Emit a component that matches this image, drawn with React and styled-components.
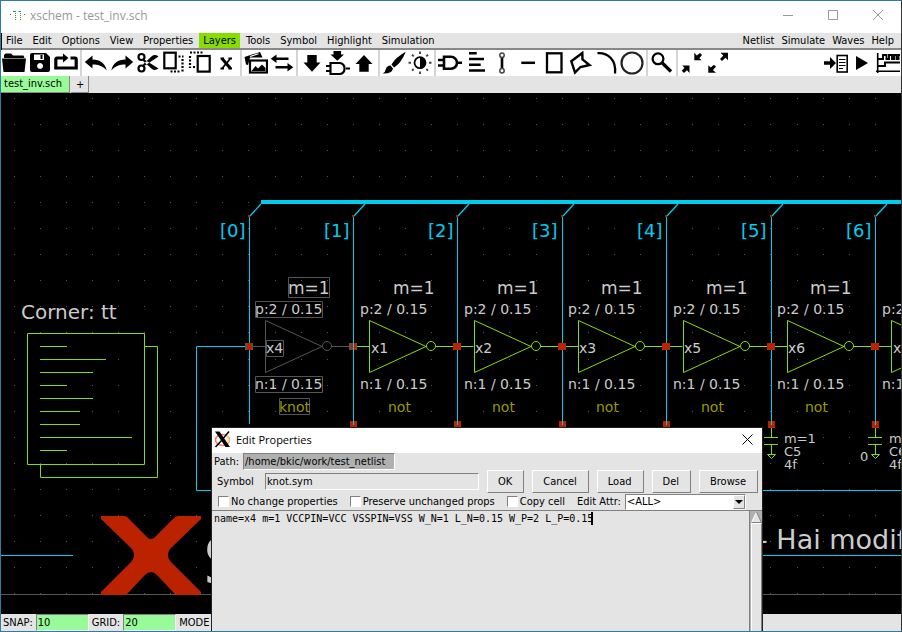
import React from "react";
import styled, { createGlobalStyle, css } from "styled-components";

const face = "#e4e4e4";
const cyan = "#00ccee";
const green = "#88dd00";
const red = "#bb2200";
const dim = "#555555";
const ink = "#cccccc";
const paleGreen = "#98fb98";

const GlobalStyle = createGlobalStyle`
  * { box-sizing: border-box; }
  html, body, #root { margin: 0; height: 100%; }
  body { overflow: hidden; background: #000; }
  body, button, input, select { font: 11px/13px "DejaVu Sans Condensed", "DejaVu Sans", sans-serif; color: #000; }
`;

const Window = styled.div`
  position: relative;
  display: flex;
  flex-direction: column;
  height: 100vh;
  overflow: hidden;
  border: 1px solid #2a7da8;
  border-right-color: #333;
`;

const TitleBar = styled.header`
  display: flex;
  align-items: center;
  flex: none;
  height: ${(p) => (p.$dialog ? "25px" : "32px")};
  padding: ${(p) => (p.$dialog ? "0 9px 2px 2px" : "0 17px 3px 8px")};
  gap: 5px;
  background: #fff;
  color: ${(p) => (p.$dialog ? "#000" : "#999")};
`;

const Title = styled.h1`
  flex: 1;
  margin: 0;
  font: 12px/16px "Open Sans", sans-serif;
  font-size: ${(p) => (p.$small ? "11px" : "12px")};
`;

const WindowButtons = styled.div`
  display: flex;
  gap: 34px;
`;

const GlyphButton = styled.button`
  display: flex;
  padding: 0;
  border: 0;
  background: none;
`;

const MenuBar = styled.nav`
  display: flex;
  flex: none;
  height: 17px;
  margin-left: 1px;
  padding-right: 3px;
  gap: 2px;
  background: ${face};
  border-bottom: 2px solid #888;
`;

const MenuItem = styled.button`
  height: 15px;
  padding: 0 4px;
  border: 0;
  background: ${(p) => (p.$active ? green : "transparent")};
`;

const Grow = styled.div`
  flex: 1;
`;

const RightMenus = styled.div`
  display: flex;
  ${MenuItem} { padding-left: 3px; }
`;

const ToolBar = styled.div`
  display: flex;
  flex: none;
  height: 26px;
  background: #fff;
`;

const ToolButton = styled.button`
  flex: none;
  width: 26px;
  height: 26px;
  padding: 1px;
  border: 0;
  background: none;
  svg { display: block; }
`;

const Separator = styled.div`
  flex: none;
  width: 2px;
  margin: 0 1px;
  background: #d4d4d4;
`;

const TabRow = styled.div`
  display: flex;
  flex: none;
  height: 17px;
  gap: 1px;
  background: ${face};
`;

const Tab = styled.button`
  height: 17px;
  padding: ${(p) => (p.$active ? "0 7px 2px 3px" : "0 4px 0 5px")};
  border: solid;
  border-width: 0 1px 1px 0;
  border-color: #888;
  background: ${(p) => (p.$active ? paleGreen : face)};
`;

const Canvas = styled.main`
  flex: 1;
  min-height: 0;
  background: #000;
  overflow: hidden;
  svg { display: block; font-family: "DejaVu Sans", sans-serif; }
`;

const StatusBar = styled.footer`
  display: flex;
  align-items: center;
  flex: none;
  height: 17px;
  gap: 3px;
  padding-left: 2px;
  background: ${face};
`;

const sunken = css`
  border: 1px solid;
  border-color: #808080 #fff #fff #808080;
  border-radius: 0;
  outline: 0;
`;

const StatusInput = styled.input`
  ${sunken}
  width: 53px;
  height: 17px;
  padding: 0 1px;
  background: ${paleGreen};
`;

const Dialog = styled.section`
  position: absolute;
  left: 210px;
  top: 426px;
  bottom: -2px;
  width: 552px;
  display: flex;
  flex-direction: column;
  background: ${face};
  border: 1px solid #222;
`;

const PathRow = styled.div`
  display: flex;
  align-items: center;
  flex: none;
  height: 17px;
  padding-left: 2px;
  gap: 4px;
`;

const SymbolRow = styled.div`
  display: flex;
  align-items: center;
  flex: none;
  height: 23px;
  padding: 0 4px 0 5px;
  gap: 8px;
`;

const CheckRow = styled.div`
  display: flex;
  align-items: center;
  flex: none;
  height: 17px;
  padding: 0 16px 0 6px;
  gap: 12px;
`;

const PathInput = styled.input`
  ${sunken}
  width: 152px;
  height: 17px;
  padding: 0 1px;
  background: #b0b0b0;
`;

const SymbolInput = styled.input`
  ${sunken}
  flex: 1;
  min-width: 0;
  height: 17px;
  margin-left: 3px;
  padding: 0 1px;
  background: ${face};
`;

const PushButton = styled.button`
  height: 23px;
  padding: 0 11px 0 10px;
  border: 1px solid;
  border-color: #fff #808080 #808080 #fff;
  background: ${face};
`;

const CheckLabel = styled.label`
  display: flex;
  align-items: center;
  gap: 2px;
  white-space: nowrap;
`;

const CheckBox = styled.input`
  ${sunken}
  appearance: none;
  width: 11px;
  height: 11px;
  margin: 0;
  background: #fff;
`;

const AttrLabel = styled.label`
  white-space: nowrap;
`;

const SelectBox = styled.div`
  ${sunken}
  display: grid;
  flex: 1;
  height: 16px;
  margin-left: -8px;
  background: #fff;
  > * { grid-area: 1 / 1; }
`;

const Select = styled.select`
  appearance: none;
  border: 0;
  padding: 0 1px;
  background: transparent;
  outline: 0;
`;

const SelectArrow = styled.span`
  display: flex;
  align-items: center;
  justify-content: center;
  justify-self: end;
  width: 12px;
  height: 14px;
  pointer-events: none;
  background: ${face};
  border: 1px solid;
  border-color: #fff #808080 #808080 #fff;
`;

const Editor = styled.div`
  position: relative;
  display: flex;
  flex: 1;
  min-height: 0;
  border-top: 1px solid #808080;
  font: 10px/13px "DejaVu Sans Mono", monospace;
`;

const TextArea = styled.textarea`
  flex: 1;
  padding: 1px 2px;
  border: 0;
  outline: 0;
  resize: none;
  overflow: hidden;
  background: ${face};
  color: #000;
  font: inherit;
`;

const Caret = styled.span`
  position: absolute;
  top: 1px;
  left: 63ch;
  width: 2px;
  height: 13px;
  background: #000;
`;

const ScrollBar = styled.div`
  display: flex;
  flex-direction: column;
  width: 13px;
  border-left: 1px solid #808080;
  padding-left: 1px;
  background: #b0b0b0;
`;

const ScrollThumb = styled.div`
  flex: 1;
  background: ${face};
  border: 1px solid #fff;
  border-right-color: #808080;
`;

/* ---------- toolbar icons, 24 x 24 ---------- */

const line = { fill: "none", stroke: "#000", strokeWidth: 2.2 };

const icons = {
  open: (
    <>
      <path d="M2 7V4L3.500 2.500H9L11 4.500H21.500L22.500 7Z" />
      <path d="M0 7.500H24L22.500 21H1.500Z" />
    </>
  ),
  save: (
    <path fillRule="evenodd" d="M4 2H18L22 6V19Q22 21 20 21H4Q2 21 2 19V4Q2 2 4 2ZM6 3.500V9H16V3.500ZM12.500 4H14.500V8H12.500ZM12 12A3 3 0 1 0 12.100 12Z" />
  ),
  merge: (
    <>
      <path d="M9 7H3Q1.800 7 1.800 8.500V17H22.200V8.500Q22.200 7 21 7H16.500" {...line} strokeWidth="3.200" />
      <path d="M9 2.500L14.500 7L9 11.500Z" />
    </>
  ),
  undo: <path d="M.8 11L8.500 4.500V8.500C16 8.500 21 12 22.700 19.500C18.500 14.500 14 13.500 8.500 13.500V17.500Z" />,
  redo: <path d="M23.200 11L15.500 4.500V8.500C8 8.500 3 12 1.300 19.500C5.500 14.500 10 13.500 15.500 13.500V17.500Z" />,
  cut: (
    <>
      <circle cx="5.500" cy="6" r="3" {...line} />
      <circle cx="5.500" cy="17.500" r="3" {...line} />
      <path d="M7.500 8L22.500 17.500Q19 20 16 18L7 10ZM7.500 15.500L22.500 5.500Q19 3 16 5L7 13.500Z" />
    </>
  ),
  copy: (
    <>
      <rect x="2.300" y="1.700" width="11.400" height="15.600" {...line} />
      <path d="M16.500 5.500H21.500M20.500 8V21M17.500 20.500H7" {...line} strokeDasharray="2 1.500" />
    </>
  ),
  move: (
    <>
      <path d="M2 1.500H15M2 5V17M5 16H8" {...line} strokeDasharray="2 1.500" />
      <rect x="9.700" y="5" width="12" height="15.600" {...line} />
    </>
  ),
  del: (
    <>
      <path d="M8 7.500L16.500 17.500" {...line} strokeWidth="3" />
      <path d="M16.500 7.500L8 17.500M6.500 7.500H10M14.500 7.500H18M6.500 17.500H10M14.500 17.500H18" {...line} strokeWidth="1.800" />
    </>
  ),
  pictures: (
    <>
      <path d="M2 13.500L.5 6L8 3.500L16 1L18.500 6.500H6L4 14Z" />
      <path d="M6 5.500L14.500 2.800" stroke="#fff" strokeWidth="1.200" />
      <rect x="6" y="9.500" width="17" height="12" {...line} />
      <path d="M7.500 20L11.500 15L14 17.500L18 13.500L21.500 17V20Z" />
    </>
  ),
  swap: <path d="M.7 7.700L6.500 3.500V6.400H18.500V9H6.500V11.900ZM23.300 16.300L17.500 12.100V15H5.500V17.600H17.500V20.500Z" />,
  down: <path d="M7.300 4H16.700V11.500H20.500L12 20.700L3.500 11.500H7.300Z" />,
  insertGate: (
    <>
      <path d="M7.500 0H15V3.500H18L11.300 9.700L4.500 3.500H7.500Z" />
      <path d="M0 15H4.500M0 20H4.500M20 17.500H24M4.500 12H14A5.600 5.600 0 0 1 14 23H4.500Z" {...line} />
    </>
  ),
  up: <path d="M7.300 20.700H16.700V13H20.500L12 4L3.500 13H7.300Z" />,
  brush: <path d="M23.800 .8Q19 12.500 12 16.500L9.500 13.500Q14 6 23.800 .8ZM8.500 14.500L11 17.500Q10 23 .7 22.500Q3.500 21 3.800 18Q5 14.500 8.500 14.500Z" />,
  contrast: (
    <>
      <circle cx="12" cy="11.700" r="5.500" {...line} strokeWidth="1.800" />
      <path d="M12 6A5.700 5.700 0 0 1 12 17.400Z" />
      <path d="M12 .5V3M12 20.500V23M.5 11.700H3M21 11.700H23.500M4 3.700L5.700 5.400M18.300 18L20 19.700M4 19.700L5.700 18M18.300 5.400L20 3.700" fill="none" stroke="#444" strokeWidth="1.900" />
    </>
  ),
  gate: (
    <path d="M0 9H5.500M0 14.500H5.500M19.500 11.800H24M6 5.800H13A6 6 0 0 1 13 17.800H6Z" {...line} strokeWidth="2.600" />
  ),
  text: <path d="M5 2.300H12.700M5 8H20M5 13.700H16.700M5 19.500H21" {...line} strokeWidth="2.400" />,
  wire: (
    <>
      <path d="M12 6V18" {...line} strokeWidth="2.600" />
      <circle cx="12" cy="4.300" r="2.200" fill="#fff" stroke="#444" strokeWidth="1.500" />
      <circle cx="12" cy="19.700" r="2.200" fill="#fff" stroke="#444" strokeWidth="1.500" />
    </>
  ),
  line: <path d="M5.300 11.800H19" {...line} strokeWidth="2.500" />,
  rect: <rect x="5" y="2.300" width="14.500" height="19" {...line} strokeWidth="2.300" />,
  polygon: <path d="M14.300 2L3.300 10.300L7 21.500L12.500 16L21.500 14L14.500 8.500Z" {...line} strokeWidth="2.400" />,
  arc: <path d="M3.500 2.200C14 1.500 22.500 9 21 22.500" {...line} strokeWidth="2.300" />,
  circle: <circle cx="12" cy="12" r="10.500" fill="none" stroke="#222" strokeWidth="2.200" />,
  search: (
    <>
      <circle cx="8" cy="7.800" r="5.400" {...line} strokeWidth="2.300" />
      <path d="M11.800 11.500L21 20.500" {...line} strokeWidth="3.200" />
    </>
  ),
  zoomOut: <path d="M14.300 1.700V9.300H21.700L19.300 7.200L22 4L20 2L16.800 4.500ZM9.500 22V14.500H2.200L4.500 16.700L1.800 19.800L4 22L7 19.300Z" />,
  zoomIn: <path d="M22 1.700V9.300L19.500 6.800L16 10L14 8L17.300 4.500L14.500 1.700ZM2.300 21.700V14.300L4.700 16.500L8 13.700L10 15.800L6.900 19L10 21.700Z" />,
  netlist: (
    <>
      <path d="M0 10.300H6V6L12 12L6 18V13.700H0Z" />
      <rect x="13.200" y="4.500" width="10" height="16.500" {...line} strokeWidth="1.600" />
      <path d="M15 8.500H21.500M15 11.500H21.500M15 14.500H21.500M15 17.500H19" {...line} strokeWidth="1.200" />
    </>
  ),
  play: <path d="M6 5L18 12L6 19Z" />,
  wave: (
    <>
      <path d="M1.700 2V22M0 20.200H24" {...line} strokeWidth="1.600" />
      <path d="M2 8H7V4H10.500V8H13V4H16V8H18V4H20.500V8H22.500V4H24M2 15H9V11.500H24" {...line} strokeWidth="1.900" />
    </>
  ),
};

const Tool = ({ name }) => (
  <ToolButton type="button" aria-label={name}>
    <svg width="24" height="24" viewBox="0 0 24 24" aria-hidden="true">{icons[name]}</svg>
  </ToolButton>
);

const toolGroups = [
  ["open", "save", "merge"],
  ["undo", "redo", "cut", "copy", "move", "del"],
  ["pictures", "swap"],
  ["down", "insertGate", "up"],
  ["brush", "contrast"],
  ["gate", "text", "wire", "line", "rect", "polygon", "arc", "circle"],
  ["search"],
  ["zoomOut", "zoomIn"],
];

/* ---------- schematic ---------- */

const stages = [
  { x: 249, body: 249, label: 249, bit: 0, name: "x4", kind: "knot", selected: true },
  { x: 353, body: 353, label: 354, bit: 1, name: "x1", kind: "not" },
  { x: 457, body: 458, label: 458, bit: 2, name: "x2", kind: "not" },
  { x: 562, body: 562, label: 562, bit: 3, name: "x3", kind: "not" },
  { x: 666, body: 667, label: 667, bit: 4, name: "x5", kind: "not" },
  { x: 771, body: 771, label: 771, bit: 5, name: "x6", kind: "not", cap: "C5" },
  { x: 875, body: 875, label: 876, bit: 6, name: "x7", kind: "not", cap: "C6" },
];

const noteLines = [67, 106, 93, 67, 93, 80, 80, 132, 67];
const dots = [];
for (let i = 0; i < 35; i++)
  for (let j = 0; j < 20; j++) dots.push([Math.floor(14 + i * 26.1), Math.floor(98 + j * 26.1)]);

const Stage = ({ x, body, label, bit, name, kind, selected, cap }) => (
  <g>
    <g transform={`translate(${x} 0)`}>
      <path d="M.5 216V424" stroke={cyan} />
      <path d="M1 216L12 204" stroke={cyan} strokeWidth="1.300" />
      <rect x="-1" y="215" width="2" height="2" fill={red} />
      <path d="M0 346.500H16.500" stroke={selected ? dim : green} />
      {cap && (
        <path d="M.5 428V437.500M-7 437.500H7M-7 444.500H7M.5 444.500V454.500M-3.500 454.500H4.500L.5 458.500Z" fill="none" stroke={green} />
      )}
    </g>
    <g transform={`translate(${body} 0)`} fill="none" stroke={selected ? dim : green}>
      <path d="M82 346.500H104M16.500 320.500V372.500L73 346.500Z" />
      <circle cx="78" cy="346" r="4.500" />
      {selected && (
        <path d="M39.500 277.500h41v20h-41zM6.500 301.500h67v16h-67zM17.500 340.500h17v16h-17zM6.500 376.500h67v16h-67zM30.500 398.500h30v16h-30z" />
      )}
    </g>
    <g transform={`translate(${label} 0)`} fill={ink} fontSize="14">
      <text x={selected ? -29 : -30} y="237" fontSize="18" fill={cyan}>[{bit}]</text>
      <text x="39" y="294" fontSize="17">m=1</text>
      <text x="6" y="314">p:2 / 0.15</text>
      <text x="17" y="353">{name}</text>
      <text x="6" y="389">n:1 / 0.15</text>
      <text x={selected ? 30 : 34} y="412" fill="#999900">{kind}</text>
      {cap && (
        <g fontSize="13">
          <text x="13" y="443">m=1</text>
          <text x="13" y="456">{cap}</text>
          <text x="13" y="469">4f</text>
          <text x="-16" y="461">0</text>
        </g>
      )}
    </g>
  </g>
);

const Pins = ({ x, selected, bit }) => (
  <g transform={`translate(${x} 0)`}>
    <rect x="-4" y="343" width="8" height="7" fill={bit < 2 ? dim : red} />
    {bit < 2 && <rect x="-2" y="343" width="5" height="7" fill={red} />}
    {bit === 1 && <path d="M.5 343V350" stroke={cyan} />}
    {!selected && <rect x="-3" y="421" width="7" height="7" fill={red} />}
    {!selected && <path d="M.5 420V425" stroke={cyan} />}
  </g>
);

const Schematic = () => (
  <svg width="100%" height="100%" aria-label="schematic">
    <g transform="translate(-1 -93)">
      <path d={dots.map(([x, y]) => `M${x} ${y}h1v1h-1z`).join("")} fill={dim} />
      <path d="M261 202H2400" stroke={cyan} strokeWidth="4" />
      <path d="M249 346.500H196.500V490.500H2400M0 555.500H73M700 555.500H2400" fill="none" stroke={cyan} />
      <path d="M0 594.500H2400" stroke={dim} />
      <text x="21" y="319" fontSize="20" fill={ink}>Corner: tt</text>
      <g fill="none" stroke={green}>
        <path d="M27.500 333.500H144.500V464.500H27.500ZM144.500 346.500H157.500V477.500H40.500V464.500" />
        <path d={noteLines.map((x, i) => `M40 ${346.5 + i * 13}H${x}`).join("")} />
      </g>
      {stages.map((s) => <Stage key={s.bit} {...s} />)}
      {stages.map((s) => <Pins key={s.bit} {...s} />)}
      <path d="M101 516H124Q127 516 129 519L145 535Q148 539 151 539Q154 539 157 535L173 519Q176 516 178 516H201V519L171 548Q168 551 168 555.500Q168 559 171 562L201 592V595H178Q175 595 173 592L157 575Q154 572 151 572Q148 572 145 575L129 592Q127 595 124 595H101V592L131 562Q134 559 134 555.500Q134 551 131 548L101 519Z" fill={red} />
      <text x="203" y="584" fontSize="64" fill={ink}>S</text>
      <text x="758" y="549" fontSize="27" fill={ink}>- Hai modified</text>
    </g>
  </svg>
);

const Check = ({ children }) => (
  <CheckLabel>
    <CheckBox type="checkbox" />
    {children}
  </CheckLabel>
);

const EditProperties = () => (
  <Dialog role="dialog" aria-label="Edit Properties">
    <TitleBar $dialog>
      <svg width="17" height="17" viewBox="0 0 17 17" aria-hidden="true">
        <ellipse cx="8.500" cy="9" rx="7" ry="5.500" fill="none" stroke="#f08050" strokeWidth="1.500" />
        <path d="M12 4Q17 8 13 13" fill="none" stroke="#f5d7a0" strokeWidth="1.800" />
        <path d="M1 .5H5.500L16 16H11.500Z" />
        <path d="M15 .5L9.500 7M7.500 9.500L1.500 16" stroke="#000" strokeWidth="1.500" />
      </svg>
      <Title $small>Edit Properties</Title>
      <GlyphButton type="button" aria-label="Close dialog">
        <svg width="11" height="11"><path d="M.5 .5L10.500 10.500M10.500 .5L.5 10.500" stroke="#000" /></svg>
      </GlyphButton>
    </TitleBar>
    <PathRow>
      <label htmlFor="path">Path:</label>
      <PathInput id="path" defaultValue="/home/bkic/work/test_netlist" />
    </PathRow>
    <SymbolRow>
      <label htmlFor="symbol">Symbol</label>
      <SymbolInput id="symbol" defaultValue="knot.sym" />
      {["OK", "Cancel", "Load", "Del", "Browse"].map((t) => (
        <PushButton type="button" key={t}>{t}</PushButton>
      ))}
    </SymbolRow>
    <CheckRow>
      <Check>No change properties</Check>
      <Check>Preserve unchanged props</Check>
      <Check>Copy cell</Check>
      <AttrLabel htmlFor="attr">Edit Attr:</AttrLabel>
      <SelectBox>
        <Select id="attr"><option>&lt;ALL&gt;</option></Select>
        <SelectArrow>
          <svg width="8" height="6"><path d="M0 1H8L4 5Z" /></svg>
        </SelectArrow>
      </SelectBox>
    </CheckRow>
    <Editor>
      <TextArea
        aria-label="Properties"
        spellCheck={false}
        defaultValue="name=x4 m=1 VCCPIN=VCC VSSPIN=VSS W_N=1 L_N=0.15 W_P=2 L_P=0.15"
      />
      <Caret />
      <ScrollBar>
        <GlyphButton type="button" aria-label="Scroll up">
          <svg width="11" height="12">
            <path d="M5.500 1L10.500 11.500H.5Z" fill={face} />
            <path d="M5.500 1L.5 11.500" stroke="#fff" />
            <path d="M5.500 1L10.500 11.500H.5" fill="none" stroke="#808080" />
          </svg>
        </GlyphButton>
        <ScrollThumb />
      </ScrollBar>
    </Editor>
  </Dialog>
);

const menus = ["File", "Edit", "Options", "View", "Properties", "Layers", "Tools", "Symbol", "Highlight", "Simulation"];

export default function App() {
  return (
    <Window>
      <GlobalStyle />
      <TitleBar>
        <svg width="16" height="10" viewBox="0 0 16 10" aria-hidden="true">
          <path d="M6.500 0V10M11.500 0V10" stroke="#3a9a2a" strokeDasharray="1 1" />
          <path d="M4 .5H6M9.500 .5H11" stroke="#3a9a2a" />
          <path d="M1 3.500H2M15 3.500H16" stroke="#c22" />
        </svg>
        <Title>xschem - test_inv.sch</Title>
        <WindowButtons>
          <GlyphButton type="button" aria-label="Minimize">
            <svg width="11" height="11"><path d="M0 5.500H10" stroke="#999" /></svg>
          </GlyphButton>
          <GlyphButton type="button" aria-label="Maximize">
            <svg width="11" height="11"><path d="M.5 .5H9.500V9.500H.5Z" fill="none" stroke="#999" /></svg>
          </GlyphButton>
          <GlyphButton type="button" aria-label="Close">
            <svg width="11" height="11"><path d="M0 0L10 10M10 0L0 10" stroke="#999" /></svg>
          </GlyphButton>
        </WindowButtons>
      </TitleBar>
      <MenuBar>
        {menus.map((m) => (
          <MenuItem type="button" key={m} $active={m === "Layers"}>{m}</MenuItem>
        ))}
        <Grow />
        <RightMenus>
          {["Netlist", "Simulate", "Waves", "Help"].map((m) => (
            <MenuItem type="button" key={m}>{m}</MenuItem>
          ))}
        </RightMenus>
      </MenuBar>
      <ToolBar>
        {toolGroups.map((g, i) => (
          <React.Fragment key={i}>
            {i > 0 && <Separator />}
            {g.map((n) => <Tool key={n} name={n} />)}
          </React.Fragment>
        ))}
        <Grow />
        {["netlist", "play", "wave"].map((n) => <Tool key={n} name={n} />)}
      </ToolBar>
      <TabRow>
        <Tab type="button" $active>test_inv.sch</Tab>
        <Tab type="button" aria-label="New tab">+</Tab>
      </TabRow>
      <Canvas><Schematic /></Canvas>
      <StatusBar>
        <label htmlFor="snap">SNAP:</label>
        <StatusInput id="snap" defaultValue="10" />
        <label htmlFor="grid">GRID:</label>
        <StatusInput id="grid" defaultValue="20" />
        <span>MODE</span>
      </StatusBar>
      <EditProperties />
    </Window>
  );
}
